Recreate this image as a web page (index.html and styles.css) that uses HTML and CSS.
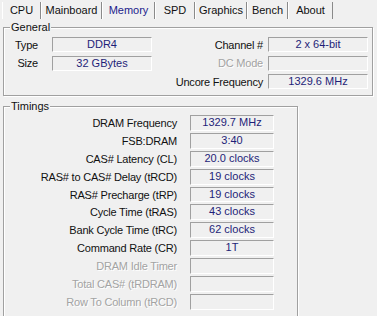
FILE: index.html
```html
<!DOCTYPE html>
<html lang="en">
<head>
  <meta charset="UTF-8" />
  <title>CPU-Z Memory</title>
  <link rel="stylesheet" href="styles.css">
</head>
<body>
  <!-- Tab strip -->
  <div class="tabs">
    <span class="tab">CPU</span>
    <span class="tab">Mainboard</span>
    <span class="tab active">Memory</span>
    <span class="tab">SPD</span>
    <span class="tab">Graphics</span>
    <span class="tab">Bench</span>
    <span class="tab">About</span>
  </div>

  <!-- General -->
  <fieldset class="group general">
    <legend>General</legend>
    <div class="general-grid">
      <span class="label short">Type</span>
      <span class="val">DDR4</span>
      <span class="label">Channel #</span>
      <span class="val">2 x 64-bit</span>

      <span class="label short">Size</span>
      <span class="val">32 GBytes</span>
      <span class="label off">DC Mode</span>
      <span class="val"></span>

      <span class="label right-only">Uncore Frequency</span>
      <span class="val">1329.6 MHz</span>
    </div>
  </fieldset>

  <!-- Timings -->
  <fieldset class="group timings">
    <legend>Timings</legend>
    <div class="timing-grid">
      <span class="label">DRAM Frequency</span>
      <span class="val">1329.7 MHz</span>
      <span class="label">FSB:DRAM</span>
      <span class="val">3:40</span>
      <span class="label">CAS# Latency (CL)</span>
      <span class="val">20.0 clocks</span>
      <span class="label">RAS# to CAS# Delay (tRCD)</span>
      <span class="val">19 clocks</span>
      <span class="label">RAS# Precharge (tRP)</span>
      <span class="val">19 clocks</span>
      <span class="label">Cycle Time (tRAS)</span>
      <span class="val">43 clocks</span>
      <span class="label">Bank Cycle Time (tRC)</span>
      <span class="val">62 clocks</span>
      <span class="label">Command Rate (CR)</span>
      <span class="val">1T</span>
      <span class="label off">DRAM Idle Timer</span>
      <span class="val"></span>
      <span class="label off">Total CAS# (tRDRAM)</span>
      <span class="val"></span>
      <span class="label off">Row To Column (tRCD)</span>
      <span class="val"></span>
    </div>
  </fieldset>
</body>
</html>
```

FILE: styles.css
```css
* {
  box-sizing: border-box;
}

html, body {
  margin: 0;
  overflow: hidden;
  background-color: #f0f0f0;
}

body {
  font-family: "Liberation Sans", Arial, sans-serif;
  font-size: 11px;
  color: #111;
}

/* tabs */
.tabs {
  display: flex;
  height: 21px;
  padding-left: 2px;
}

.tab {
  height: 17px;
  margin-top: 2px;
  line-height: 17px;
  text-align: center;
  border-left: 1px solid #fff;
  border-right: 1px solid #8a8a8a;
  white-space: nowrap;
}

.tab:nth-child(1) { width: 39px; }
.tab:nth-child(2) { width: 61px; }
.tab:nth-child(3) { width: 53px; }
.tab:nth-child(4) { width: 40px; }
.tab:nth-child(5) { width: 52px; }
.tab:nth-child(6) { width: 41px; }
.tab:nth-child(7) { width: 45px; }

.tab.active {
  color: #1c1c8c;
}

/* group boxes */
.group {
  margin: 0 0 0 3px;
  min-width: 0;
  border: 1px solid #a0a0a0;
  box-shadow: 1px 1px 0 #fff, inset 1px 1px 0 #fff;
}

.group legend {
  padding: 0 1px;
  line-height: 13px;
  background-color: #f0f0f0;
}

.general {
  width: 370px;
  padding: 3px 4px 6px 6px;
}

.timings {
  width: 295px;
  margin-top: 4px;
  padding: 2px 21px 12px 6px;
}

.general-grid {
  display: grid;
  grid-template-columns: 42px 100px 116px 100px;
  grid-auto-rows: 15px;
  row-gap: 3.5px;
  align-items: center;
}

.timing-grid {
  display: grid;
  grid-template-columns: 180px 84px;
  grid-auto-rows: 15.9px;
  row-gap: 2px;
  align-items: center;
}

.label {
  text-align: right;
  white-space: nowrap;
  padding-right: 5px;
  letter-spacing: -0.2px;
}

.label.short {
  padding-right: 14px;
}

.label.right-only {
  grid-column: 3;
}

.timing-grid .label {
  padding-right: 13px;
}

.label.off {
  color: #a3a3a3;
  text-shadow: 1px 1px 0 #fff;
}

.val {
  height: 100%;
  border: 1px solid;
  border-color: #a0a0a0 #fff #fff #a0a0a0;
  text-align: center;
  line-height: 13px;
  color: #1e1e78;
  white-space: nowrap;
}
```
